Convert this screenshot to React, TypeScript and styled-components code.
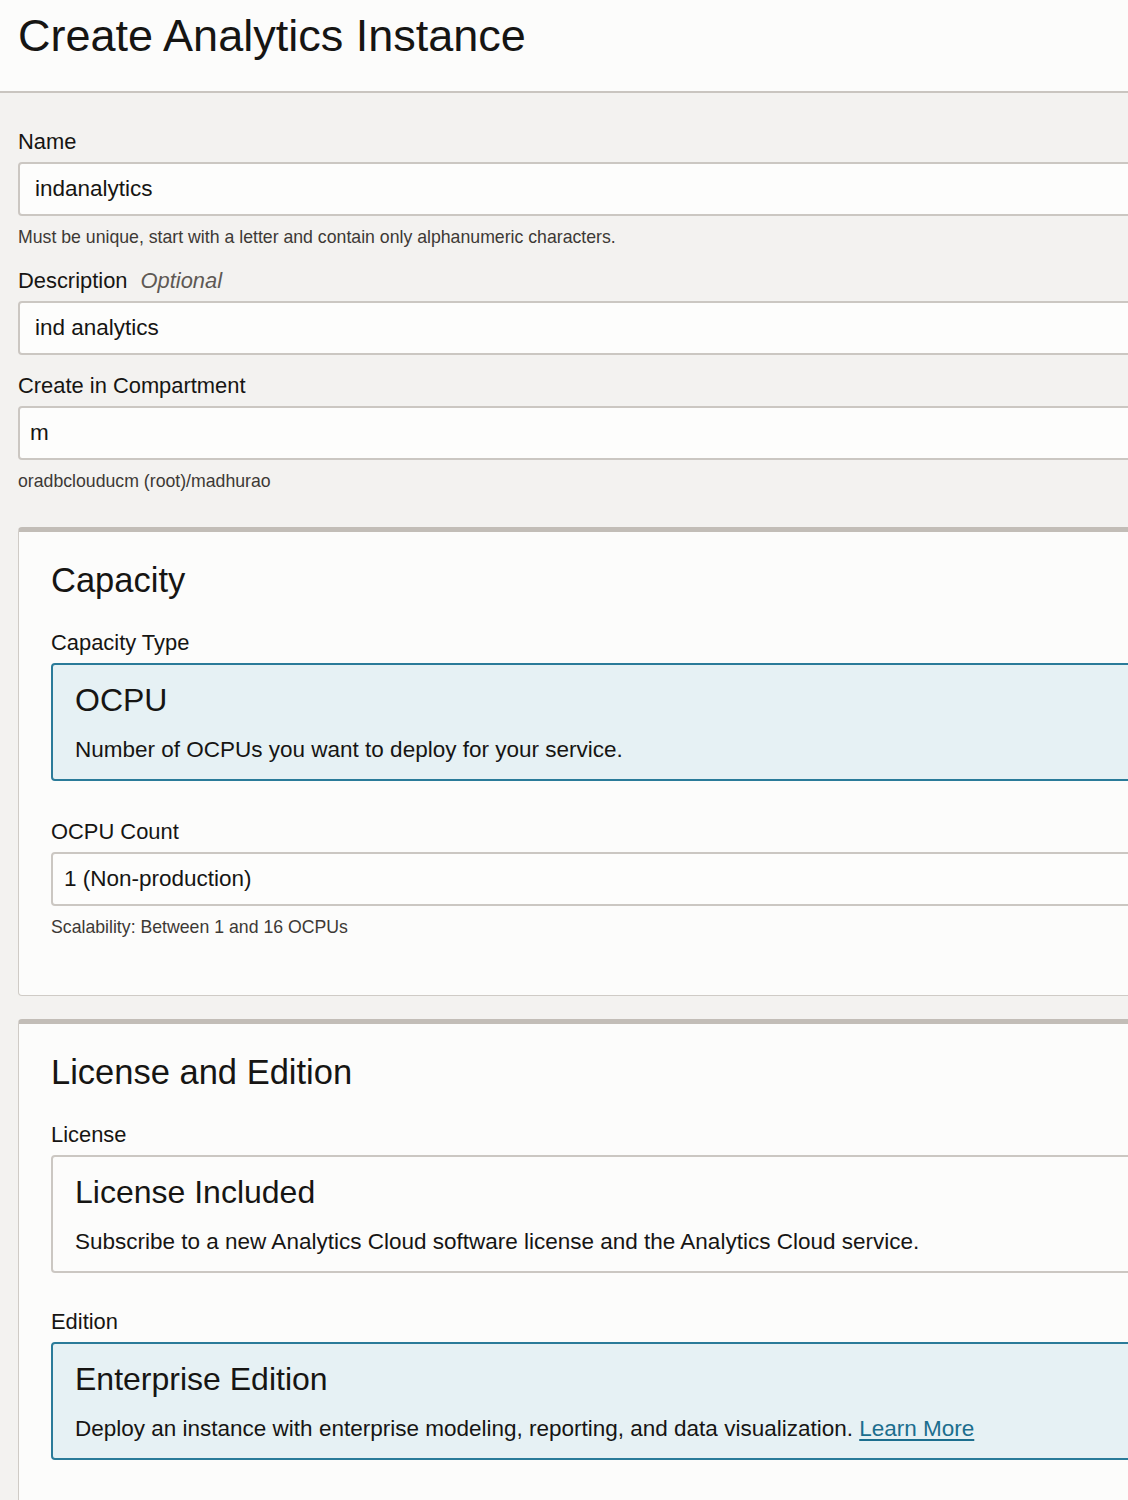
import React from "react";
import styled, { createGlobalStyle } from "styled-components";

const GlobalStyle = createGlobalStyle`
  html, body {
    margin: 0;
    padding: 0;
    overflow: hidden;
    background: #f3f2f0;
  }
  body {
    font-family: "Liberation Sans", Arial, Helvetica, sans-serif;
    color: #161513;
  }
  * { box-sizing: border-box; }
`;

const Page = styled.div`
  width: 1190px;
  min-height: 1500px;
  background: #f3f2f0;
`;

const Header = styled.header`
  height: 93px;
  background: #fcfcfb;
  border-bottom: 2px solid #c9c5c0;
  padding: 10px 18px 0;
`;

const Title = styled.h1`
  margin: 0;
  font-size: 45px;
  line-height: 52px;
  font-weight: 400;
  color: #161513;
`;

const Body = styled.main`
  padding: 36px 0 0 18px;
  display: flex;
  flex-direction: column;
`;

const Field = styled.div<{ $gap?: number }>`
  display: flex;
  flex-direction: column;
  margin-top: ${(p) => p.$gap ?? 0}px;
`;

const Label = styled.label`
  font-size: 21.9px;
  line-height: 26px;
  color: #161513;
  margin-bottom: 7px;
  display: flex;
  gap: 13px;
`;

const Optional = styled.span`
  font-style: italic;
  color: #5e5954;
`;

const Input = styled.div<{ $pad?: number }>`
  height: 54px;
  background: #fdfdfc;
  border: 2px solid #cbc7c2;
  border-radius: 4px;
  display: flex;
  align-items: center;
  padding-left: ${(p) => p.$pad ?? 15}px;
  font-size: 22.5px;
  color: #161513;
`;

const Help = styled.div`
  margin-top: 10px;
  font-size: 17.7px;
  line-height: 22px;
  color: #3d3935;
`;

const Card = styled.section<{ $gap?: number }>`
  margin-top: ${(p) => p.$gap ?? 0}px;
  background: #fcfcfb;
  border: 1px solid #cfcbc6;
  border-top: 5px solid #c2bdb7;
  border-radius: 4px;
  padding: 28px 0 57px 32px;
  display: flex;
  flex-direction: column;
`;

const CardTitle = styled.h2`
  margin: 0 0 30px;
  font-size: 34.5px;
  line-height: 40px;
  font-weight: 400;
  color: #161513;
`;

const Tile = styled.div<{ $selected?: boolean }>`
  background: ${(p) => (p.$selected ? "#e6f1f4" : "#fcfcfb")};
  border: 2px solid ${(p) => (p.$selected ? "#2a7b99" : "#cbc7c2")};
  border-radius: 4px;
  padding: 16px 0 15px 22px;
  display: flex;
  flex-direction: column;
  gap: 17px;
`;

const TileTitle = styled.div`
  font-size: 32px;
  line-height: 38px;
  color: #161513;
`;

const TileText = styled.div`
  font-size: 22.5px;
  line-height: 28px;
  color: #161513;
`;

const Link = styled.a`
  color: #1c6e8e;
  text-decoration: underline;
  text-underline-offset: 3px;
`;

export default function App() {
  return (
    <Page>
      <GlobalStyle />
      <Header>
        <Title>Create Analytics Instance</Title>
      </Header>
      <Body>
        <Field>
          <Label>Name</Label>
          <Input>indanalytics</Input>
          <Help>Must be unique, start with a letter and contain only alphanumeric characters.</Help>
        </Field>
        <Field $gap={20}>
          <Label>
            Description <Optional>Optional</Optional>
          </Label>
          <Input>ind analytics</Input>
        </Field>
        <Field $gap={18}>
          <Label>Create in Compartment</Label>
          <Input $pad={10}>m</Input>
          <Help>oradbclouducm (root)/madhurao</Help>
        </Field>

        <Card $gap={35}>
          <CardTitle>Capacity</CardTitle>
          <Field>
            <Label>Capacity Type</Label>
            <Tile $selected>
              <TileTitle>OCPU</TileTitle>
              <TileText>Number of OCPUs you want to deploy for your service.</TileText>
            </Tile>
          </Field>
          <Field $gap={38}>
            <Label>OCPU Count</Label>
            <Input $pad={11}>1 (Non-production)</Input>
            <Help>Scalability: Between 1 and 16 OCPUs</Help>
          </Field>
        </Card>

        <Card $gap={23}>
          <CardTitle>License and Edition</CardTitle>
          <Field>
            <Label>License</Label>
            <Tile>
              <TileTitle>License Included</TileTitle>
              <TileText>
                Subscribe to a new Analytics Cloud software license and the Analytics Cloud service.
              </TileText>
            </Tile>
          </Field>
          <Field $gap={36}>
            <Label>Edition</Label>
            <Tile $selected>
              <TileTitle>Enterprise Edition</TileTitle>
              <TileText>
                Deploy an instance with enterprise modeling, reporting, and data visualization.{" "}
                <Link href="#">Learn More</Link>
              </TileText>
            </Tile>
          </Field>
        </Card>
      </Body>
    </Page>
  );
}
